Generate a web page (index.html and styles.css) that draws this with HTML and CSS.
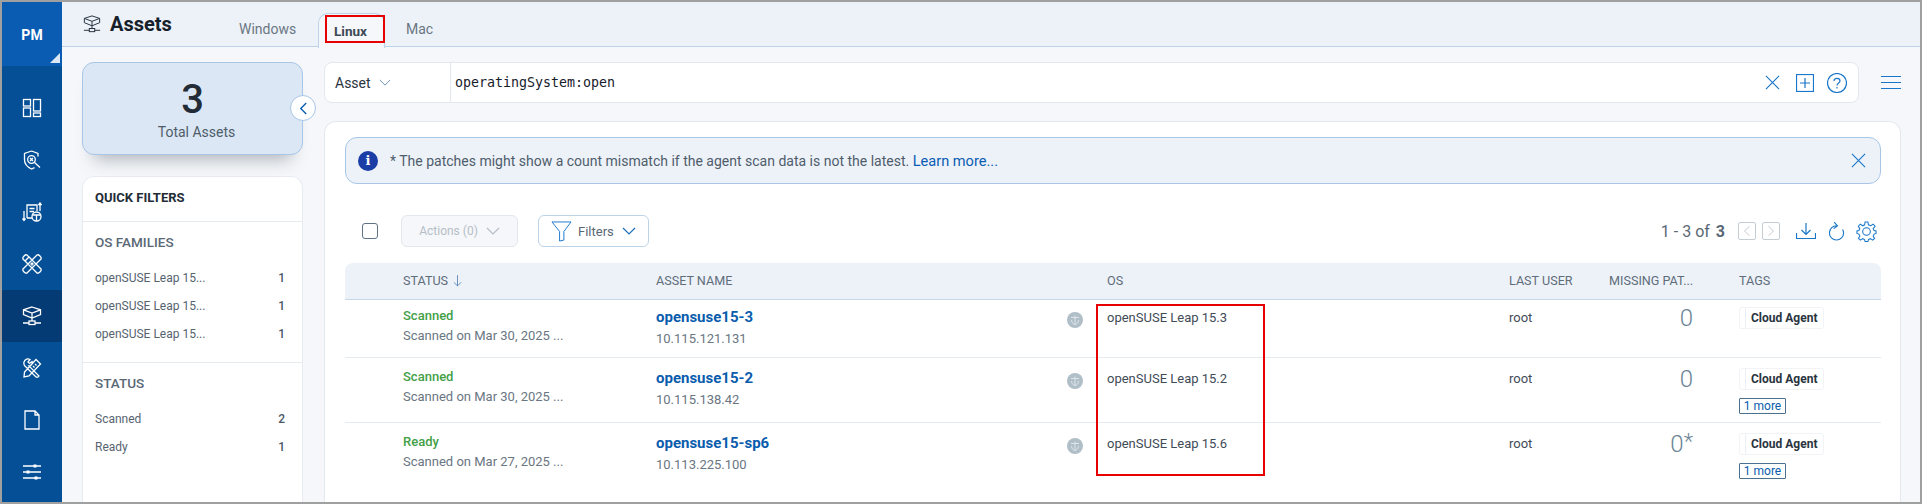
FILE: index.html
```html
<!DOCTYPE html>
<html lang="en">
<head>
<meta charset="utf-8">
<title>Assets</title>
<link rel="stylesheet" href="styles.css">
</head>
<body>
<svg class="defs" width="0" height="0" aria-hidden="true">
  <symbol id="i-net" viewBox="0 0 20 20">
    <path d="M10 1 L18.500 3.800 L18.500 8.500 L10 12 L1.500 8.500 L1.500 3.800 Z M1.500 3.800 L10 7 L18.500 3.800 M10 7 V12 M10 12 V15"/>
    <rect x="7" y="15" width="6" height="3.500"/>
    <path d="M1 17 H7 M13 17 H19"/>
  </symbol>
  <symbol id="i-x" viewBox="0 0 16 16"><path d="M1 1 L15 15 M15 1 L1 15"/></symbol>
  <symbol id="i-down" viewBox="0 0 14 8"><path d="M1 1 L7 7 L13 1"/></symbol>
  <symbol id="i-os" viewBox="0 0 16 16">
    <circle class="os-fill" cx="8" cy="8" r="8"/>
    <path class="os-line" d="M4 5.500 H12 M8 3.500 V12.500 M4.500 8 C4.500 11 7 12.500 8 12.500 C9 12.500 11.500 11 11.500 8"/>
  </symbol>
</svg>
<div class="frame">
  <nav class="rail">
    <div class="rail-brand">PM</div>
    <ul class="rail-list">
      <li class="rail-item"><svg class="nav-icon" viewBox="0 0 20 20"><rect x="1.500" y="1.500" width="7" height="6.500"/><rect x="1.500" y="10" width="7" height="8.500"/><rect x="11.500" y="1.500" width="7" height="11.500"/><rect x="11.500" y="15" width="7" height="3.500"/></svg></li>
      <li class="rail-item"><svg class="nav-icon" viewBox="0 0 20 20"><path d="M9.500 1 L16 3.500 V6.500 M9.500 1 L2.500 3.500 V10 C2.500 14 5.500 17 9.500 19 L12.500 17.600"/><circle cx="9.500" cy="9.500" r="3.800"/><path d="M8 8 L11 11 M11 8 L8 11 M12.300 12.300 L18 17.500"/></svg></li>
      <li class="rail-item"><svg class="nav-icon" viewBox="0 0 20 20"><path d="M5 16 V3 H15 V9 M5 16 H10 M7.500 6.500 H12.500 M7.500 9.500 H12 M2 9 V18 M0.500 16.500 L2 18.500 L3.500 16.500 M18 9 V1 M16.500 3 L18 1 L19.500 3"/><circle cx="14.500" cy="14.500" r="4.500"/><path d="M10.500 13 H18.500 M14.500 13 V19"/></svg></li>
      <li class="rail-item"><svg class="nav-icon" viewBox="0 0 20 20"><path d="M3 7 L1 5 C0 3.500 3.500 0 5 1 L7 3 M13 3 L15 1 C16.500 0 20 3.500 19 5 L17 7 L7 17 L5 19 C3.500 20 0 16.500 1 15 L3 13 Z M3 7 L13 17 L15 19 C16.500 20 20 16.500 19 15 L17 13 L7 3 Z M9 10 L10 9 L11 10 L10 11 Z"/></svg></li>
      <li class="rail-item rail-item-active"><svg class="nav-icon"><use href="#i-net"/></svg></li>
      <li class="rail-item"><svg class="nav-icon" viewBox="0 0 20 20"><path d="M2 4 C3 1 6 0 8 1.500 L6 4 L7.500 5.500 L10 3.500 C11 6 9 8 7 8 L17 18 C16 19.500 15 19.500 14 19 L4 9 C2.500 8 1.500 6 2 4 Z M14 1.500 L18.500 6 L7 18 L2 19 L2.500 14 Z M11 8 L12.500 9.500 M13 6 L14.500 7.500"/></svg></li>
      <li class="rail-item"><svg class="nav-icon" viewBox="0 0 20 20"><path d="M3 1 H13 L17 5 V19 H3 Z M13 1 V5 H17"/></svg></li>
      <li class="rail-item"><svg class="nav-icon" viewBox="0 0 20 20"><path d="M1 4 H19 M1 10 H19 M1 16 H19"/><rect class="nav-dot" x="11.500" y="2.500" width="3" height="3"/><rect class="nav-dot" x="4.500" y="8.500" width="3" height="3"/><rect class="nav-dot" x="12.500" y="14.500" width="3" height="3"/></svg></li>
    </ul>
  </nav>

  <div class="main">
    <header class="topbar">
      <div class="page-title"><svg class="title-icon"><use href="#i-net"/></svg><h1>Assets</h1></div>
      <div class="tabs">
        <a class="tab tab-windows">Windows</a>
        <a class="tab tab-active">Linux<span class="mark mark-tab"></span></a>
        <a class="tab tab-mac">Mac</a>
      </div>
    </header>

    <div class="content">
      <aside class="side">
        <div class="stat">
          <div class="stat-value">3</div>
          <div class="stat-label">Total Assets</div>
          <button class="collapse"><svg viewBox="0 0 10 14"><path d="M8 1 L2 7 L8 13"/></svg></button>
        </div>
        <div class="filters">
          <div class="filters-head">QUICK FILTERS</div>
          <section class="filter-group">
            <h2>OS FAMILIES</h2>
            <div class="filter-row"><span>openSUSE Leap 15...</span><b>1</b></div>
            <div class="filter-row"><span>openSUSE Leap 15...</span><b>1</b></div>
            <div class="filter-row"><span>openSUSE Leap 15...</span><b>1</b></div>
          </section>
          <section class="filter-group">
            <h2>STATUS</h2>
            <div class="filter-row"><span>Scanned</span><b>2</b></div>
            <div class="filter-row"><span>Ready</span><b>1</b></div>
          </section>
        </div>
      </aside>

      <div class="work">
        <div class="search-row">
          <div class="search">
            <div class="search-type">Asset<svg class="chev chev-thin"><use href="#i-down"/></svg></div>
            <div class="search-query">operatingSystem:open</div>
            <div class="search-actions">
              <svg class="ico ico-x"><use href="#i-x"/></svg>
              <svg class="ico ico-plus" viewBox="0 0 18 18"><rect x="0.500" y="0.500" width="17" height="17"/><path d="M9 4 V14 M4 9 H14"/></svg>
              <svg class="ico ico-help" viewBox="0 0 20 20"><circle cx="10" cy="10" r="9.500"/><path d="M7 8 C7 4.500 13 4.500 13 8 C13 10 10 10 10 12.500 M10 14 V15.500"/></svg>
            </div>
          </div>
          <svg class="ico ico-menu" viewBox="0 0 20 14"><path d="M0 0.500 H20 M0 6.500 H20 M0 12.500 H20"/></svg>
        </div>

        <div class="panel">
          <div class="alert">
            <span class="alert-icon">i</span>
            <p>* The patches might show a count mismatch if the agent scan data is not the latest. <a>Learn more...</a></p>
            <svg class="ico ico-x"><use href="#i-x"/></svg>
          </div>

          <div class="toolbar">
            <span class="check"></span>
            <button class="btn btn-off">Actions (0)<svg class="chev chev-off"><use href="#i-down"/></svg></button>
            <button class="btn btn-filter"><svg class="ico ico-funnel" viewBox="0 0 22 22"><path d="M1 1 H21 L13.500 11 V20 L9 21 V11 Z"/></svg>Filters<svg class="chev"><use href="#i-down"/></svg></button>
            <div class="pager">
              <span class="count">1 - 3 of <b>3</b></span>
              <span class="page-btn"><svg viewBox="0 0 10 14"><path d="M8 1 L2 7 L8 13"/></svg></span>
              <span class="page-btn"><svg viewBox="0 0 10 14"><path d="M2 1 L8 7 L2 13"/></svg></span>
              <svg class="ico ico-download" viewBox="0 0 20 18"><path d="M10 1 V12 M5.500 8 L10 12.500 L14.500 8 M0.500 11 V16.500 H19.500 V11"/></svg>
              <svg class="ico ico-refresh" viewBox="0 0 18 20"><path d="M9 4.500 A7.500 7.500 0 1 0 16.500 12 C16.500 10.500 16 9.500 15.500 8.500 M6.500 0.500 L10 4.500 L6 7.500"/></svg>
              <svg class="ico ico-gear" viewBox="0 0 22 22"><circle cx="11" cy="11" r="4"/><path d="M9.500 1 H12.500 L13 4 L15.500 5 L18 3.300 L20 5.500 L18 8 L19 10 L21 10.500 V13 L19 13.700 L18 16 L19.500 18.300 L17.500 20 L15 18.500 L13 19.500 L12.500 21.500 H9.500 L9 19.500 L7 18.500 L4.500 20 L2.500 18 L4 16 L3 13.700 L1 13 V10.500 L3 10 L4 8 L2.500 5.500 L4.500 3.300 L7 5 L9 4 Z"/></svg>
            </div>
          </div>

          <div class="table">
            <div class="thead">
              <div>STATUS <svg class="sort" viewBox="0 0 10 14"><path d="M5 1 V13 M1 9 L5 13 L9 9"/></svg></div>
              <div>ASSET NAME</div>
              <div>OS</div>
              <div>LAST USER</div>
              <div>MISSING PAT...</div>
              <div>TAGS</div>
            </div>
            <div class="row row-first">
              <div><div class="state">Scanned</div><div class="sub">Scanned on Mar 30, 2025 ...</div></div>
              <div class="asset"><div><a class="asset-name">opensuse15-3</a><div class="ip">10.115.121.131</div></div><svg class="os-icon"><use href="#i-os"/></svg></div>
              <div class="cell">openSUSE Leap 15.3</div>
              <div class="cell">root</div>
              <div class="missing">0</div>
              <div class="tags"><span class="tag"><span>Cloud Agent</span></span></div>
            </div>
            <div class="row">
              <div><div class="state">Scanned</div><div class="sub">Scanned on Mar 30, 2025 ...</div></div>
              <div class="asset"><div><a class="asset-name">opensuse15-2</a><div class="ip">10.115.138.42</div></div><svg class="os-icon"><use href="#i-os"/></svg></div>
              <div class="cell">openSUSE Leap 15.2</div>
              <div class="cell">root</div>
              <div class="missing">0</div>
              <div class="tags"><span class="tag"><span>Cloud Agent</span></span><a class="more">1 more</a></div>
            </div>
            <div class="row row-last">
              <div><div class="state">Ready</div><div class="sub">Scanned on Mar 27, 2025 ...</div></div>
              <div class="asset"><div><a class="asset-name">opensuse15-sp6</a><div class="ip">10.113.225.100</div></div><svg class="os-icon"><use href="#i-os"/></svg></div>
              <div class="cell">openSUSE Leap 15.6</div>
              <div class="cell">root</div>
              <div class="missing">0<sup>*</sup></div>
              <div class="tags"><span class="tag"><span>Cloud Agent</span></span><a class="more">1 more</a></div>
            </div>
            <span class="mark mark-os"></span>
          </div>
        </div>
      </div>
    </div>
  </div>
</div>
</body>
</html>
```
FILE: styles.css
```css
* { box-sizing: border-box; }
html, body { margin: 0; height: 100%; overflow: hidden; }
body { font-family: Roboto, "Liberation Sans", sans-serif; color: #4f5d6b; background: #fff; }
svg { display: block; fill: none; }
.defs { position: absolute; }
h1, h2, p, ul { margin: 0; padding: 0; }

.frame { display: flex; width: 1922px; height: 504px; border: 2px solid #a0a0a0; overflow: hidden; }

/* left rail */
.rail { flex: none; width: 60px; background: #054f96; }
.rail-brand { position: relative; height: 64px; padding-top: 24px; background: #0a5cb2; color: #fff; font-size: 14px; font-weight: 700; line-height: 18px; text-align: center; }
.rail-brand::after { content: ""; position: absolute; right: 2px; bottom: 3px; border-style: solid; border-width: 0 0 10px 10px; border-color: transparent transparent #dbe7f4 transparent; }
.rail-list { list-style: none; padding-top: 16px; }
.rail-item { display: flex; align-items: center; justify-content: center; height: 52px; }
.rail-item-active { background: #053b75; }
.nav-icon { width: 20px; height: 20px; stroke: #fff; stroke-width: 1.300; }
.nav-dot { fill: #fff; stroke: none; }

/* top bar */
.main { flex: 1; min-width: 0; display: flex; flex-direction: column; }
.topbar { flex: none; display: flex; height: 45px; padding-left: 21px; background: #edf2f9; border-bottom: 1px solid #bcd3ea; }
.page-title { display: flex; align-items: center; gap: 9px; width: 156px; height: 44px; }
.page-title h1 { font-size: 20px; font-weight: 700; line-height: 24px; color: #16202b; }
.title-icon { width: 18px; height: 18px; stroke: #2a3440; stroke-width: 1.100; }
.tabs { display: flex; align-items: flex-end; height: 45px; }
.tab { display: block; height: 35px; font-size: 14px; line-height: 34px; color: #6a7682; }
.tab-windows { width: 79px; }
.tab-mac { margin-left: 21px; }
.tab-active { position: relative; width: 67px; padding-left: 15px; height: 35px; margin-bottom: -1px; background: #f5f7fa; border: 1px solid #bcd3ea; border-bottom: 0; border-radius: 10px 10px 0 0; color: #3c4854; font-weight: 700; font-size: 13.500px; }
.mark { position: absolute; border: 2px solid #e60000; pointer-events: none; }
.mark-tab { left: 6px; top: 1px; width: 60px; height: 28px; }

/* content */
.content { flex: 1; min-height: 0; display: flex; gap: 21px; padding: 15px 19px 0 20px; background: #f5f7fa; }
.side { flex: none; display: flex; flex-direction: column; gap: 21px; width: 221px; }
.stat { position: relative; height: 93px; text-align: center; background: #dbe7f4; border: 1px solid #a8c6e6; border-radius: 12px; box-shadow: 0 16px 16px -12px rgba(40, 50, 60, .35); }
.stat-value { padding-top: 12px; font-size: 40px; font-weight: 500; line-height: 50px; color: #232c36; }
.stat-label { margin-top: -3px; padding-left: 8px; font-size: 14px; line-height: 20px; color: #4f5d6b; }
.collapse { position: absolute; top: 32px; right: -14px; width: 26px; height: 26px; padding: 0; display: flex; align-items: center; justify-content: center; background: #fff; border: 1px solid #a8c6e6; border-radius: 50%; }
.collapse svg { width: 9px; height: 13px; stroke: #0a5cb2; stroke-width: 1.500; }

.filters { flex: 1; background: #fff; border: 1px solid #e8ecf1; border-bottom: 0; border-radius: 12px 12px 0 0; }
.filters-head { height: 45px; padding: 12px 0 0 12px; font-size: 13px; font-weight: 700; line-height: 18px; color: #232c36; border-bottom: 1px solid #e6ebf0; }
.filter-group { padding: 11px 17px 14px 12px; border-bottom: 1px solid #e6ebf0; }
.filter-group:last-child { border-bottom: 0; }
.filter-group h2 { margin-bottom: 13px; font-size: 13.500px; font-weight: 500; line-height: 18px; color: #5a6876; }
.filter-row { display: flex; justify-content: space-between; height: 28px; font-size: 12px; line-height: 28px; color: #56636f; }
.filter-row b { font-weight: 500; color: #4a5764; }

/* search */
.work { flex: 1; min-width: 0; display: flex; flex-direction: column; gap: 18px; }
.search-row { flex: none; display: flex; align-items: center; justify-content: space-between; }
.search { display: flex; align-items: center; width: 1535px; height: 41px; background: #fff; border: 1px solid #e3e8ee; border-radius: 8px; }
.search-type { display: flex; align-items: center; gap: 8px; width: 126px; height: 100%; padding-left: 10px; font-size: 14px; color: #2a3440; border-right: 1px solid #e3e8ee; }
.search-query { flex: 1; padding-left: 4px; font-family: "DejaVu Sans Mono", "Liberation Mono", monospace; font-size: 13.300px; color: #16202b; }
.search-actions { display: flex; align-items: center; padding-right: 11px; }
.ico { flex: none; stroke: #1976c9; stroke-width: 1.200; }
.ico-x { width: 15px; height: 15px; }
.ico-plus { width: 18px; height: 18px; margin-left: 16px; }
.ico-help { width: 20px; height: 20px; margin-left: 13px; }
.ico-menu { width: 20px; height: 14px; stroke-width: 1; }
.chev { flex: none; width: 14px; height: 8px; stroke: #1b6fb8; stroke-width: 1.200; }
.chev-thin { width: 12px; height: 7px; stroke: #5b87b5; stroke-width: 1; }
.chev-off { stroke: #b5bec7; }

/* panel */
.panel { flex: 1; min-height: 0; padding: 15px 19px 0 20px; background: #fff; border: 1px solid #e3e8ee; border-bottom: 0; border-radius: 12px 12px 0 0; }
.alert { display: flex; align-items: center; height: 47px; padding: 0 14px 0 12px; background: #edf2f9; border: 1px solid #a8c6e6; border-radius: 12px; }
.alert-icon { flex: none; width: 20px; height: 20px; margin-right: 12px; text-align: center; font-family: "DejaVu Serif", serif; font-size: 13px; font-weight: 700; line-height: 20px; color: #fff; background: #1a3ea6; border-radius: 50%; }
.alert p { flex: 1; font-size: 14px; color: #4f5d6b; }
.alert a { font-size: 14.600px; color: #0a5cb2; }

.toolbar { display: flex; align-items: center; height: 32px; margin-top: 31px; padding-left: 17px; }
.check { flex: none; width: 16px; height: 16px; margin-right: 23px; background: #fff; border: 1px solid #5f7385; border-radius: 3px; }
.btn { display: flex; align-items: center; height: 32px; padding: 0; font-family: inherit; font-size: 12px; border-radius: 6px; }
.btn-off { justify-content: center; gap: 8px; width: 117px; margin-right: 20px; background: #f5f7fa; border: 1px solid #e3e8ee; color: #b5bec7; }
.btn-filter { width: 111px; padding-left: 12px; background: #fff; border: 1px solid #bcd3ea; color: #5a6876; font-size: 13px; }
.ico-funnel { width: 21px; height: 21px; margin-right: 6px; stroke-width: 1; }
.btn-filter .chev { margin-left: 8px; }
.pager { display: flex; align-items: center; margin-left: auto; }
.count { margin-right: 13px; font-size: 16px; color: #5a6876; }
.count b { font-weight: 700; margin-left: 2px; }
.page-btn { display: flex; align-items: center; justify-content: center; width: 18px; height: 18px; margin-right: 6px; border: 1px solid #c4ccd4; border-radius: 2px; }
.page-btn svg { width: 8px; height: 12px; stroke: #b5bec7; stroke-width: 1; }
.ico-download { width: 20px; height: 18px; margin-left: 10px; }
.ico-refresh { width: 17px; height: 20px; margin-left: 12px; }
.ico-gear { width: 21px; height: 21px; margin: 0 4px 0 11px; stroke-width: 1.100; }

/* table */
.table { position: relative; margin-top: 16px; }
.thead, .row { display: grid; grid-template-columns: 253px 451px 402px 100px 130px 142px; padding-left: 58px; }
.thead { height: 37px; align-items: center; padding-bottom: 2px; font-size: 12.600px; color: #5f6d7a; background: #edf2f9; border-bottom: 1px solid #c8d8e8; border-radius: 8px 8px 0 0; }
.thead > div:first-child { display: flex; align-items: center; gap: 5px; }
.sort { width: 9px; height: 13px; stroke: #5b87b5; stroke-width: 1; }
.row { height: 65px; padding-top: 9px; font-size: 13px; color: #3f4b57; border-bottom: 1px solid #e6ebf0; }
.row-first { height: 58px; padding-top: 6px; }
.row-last { border-bottom: 0; }
.state { font-size: 13px; font-weight: 500; line-height: 20px; color: #43a047; }
.sub { font-size: 13px; line-height: 20px; color: #6a7682; }
.asset { display: flex; justify-content: space-between; padding-right: 24px; }
.asset-name { display: block; margin-top: 1px; font-size: 15px; font-weight: 700; line-height: 20px; color: #0a5cad; }
.ip { margin-top: 2px; font-size: 13px; line-height: 20px; color: #6a7682; }
.os-icon { width: 16px; height: 16px; margin-top: 6px; }
.os-fill { fill: #b0bec8; }
.os-line { stroke: #dde4ea; stroke-width: 1; }
.cell { margin-top: 2px; line-height: 20px; }
.missing { padding-right: 46px; text-align: right; font-size: 24px; font-weight: 300; line-height: 24px; color: #6b8496; }
.missing sup { font-size: 22px; line-height: 0; vertical-align: 3px; }
.tags { display: flex; flex-direction: column; align-items: flex-start; gap: 8px; margin-top: 1px; }
.tag { display: block; width: 85px; height: 22px; padding-left: 5px; background: #fff; border: 1px solid #f1f3f6; border-radius: 3px; }
.tag span { display: block; height: 20px; padding: 0 5px; font-size: 12px; font-weight: 700; line-height: 20px; color: #2a3440; border-left: 1px solid #eceff3; white-space: nowrap; }
.more { display: block; width: 47px; height: 16px; font-size: 12px; line-height: 14px; text-align: center; color: #0a5cad; border: 1px solid #4a6f8f; border-radius: 1px; }
.mark-os { left: 751px; top: 41px; width: 169px; height: 172px; }
```
